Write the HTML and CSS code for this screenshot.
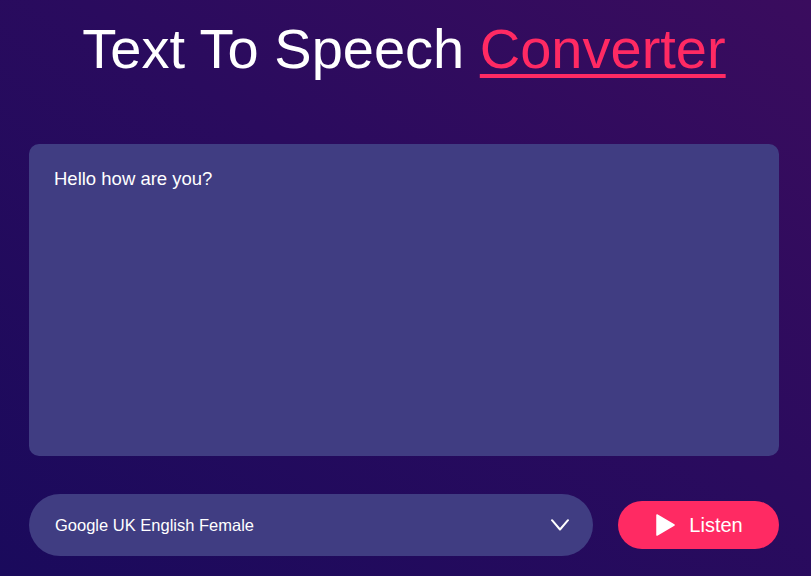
FILE: index.html
```html
<!DOCTYPE html>
<html lang="en">
<head>
<meta charset="utf-8">
<title>Text To Speech Converter</title>
<link rel="stylesheet" href="styles.css">
</head>
<body>
<main class="app">
  <h1 class="title">Text To Speech <a href="#" class="title-accent">Converter</a></h1>
  <textarea class="text-box" spellcheck="false">Hello how are you?</textarea>
  <div class="controls">
    <div class="voice-select">
      <span class="voice-name">Google UK English Female</span>
      <svg class="chevron" width="18" height="12" viewBox="0 0 18 12" aria-hidden="true">
        <path d="M1 1.2 L9 10.5 L17 1.2" fill="none" stroke="#fff" stroke-width="2" stroke-linecap="round" stroke-linejoin="round"/>
      </svg>
    </div>
    <button class="listen-btn" type="button">
      <svg class="play" width="19" height="22" viewBox="0 0 19 22" aria-hidden="true">
        <path d="M1 1 L18 11 L1 21 Z" fill="#fff" stroke="#fff" stroke-width="1.5" stroke-linejoin="round"/>
      </svg>
      <span>Listen</span>
    </button>
  </div>
</main>
</body>
</html>
```
FILE: styles.css
```css
html, body {
  margin: 0;
  height: 100%;
}

body {
  background: linear-gradient(to right top, #1a0a5c 0%, #2a0b5e 55%, #3a0c5e 100%);
  font-family: "Liberation Sans", Arial, sans-serif;
  color: #fff;
  overflow: hidden;
}

.app {
  width: 750px;
  margin: 0 0 0 29px;
  padding-top: 16px;
  display: flex;
  flex-direction: column;
}

.title {
  margin: 0;
  font-size: 56px;
  font-weight: 400;
  line-height: normal;
  text-align: center;
  color: #fff;
}

.title-accent {
  color: #ff2a63;
  text-decoration: underline;
  text-decoration-thickness: 4px;
  text-underline-offset: 6px;
}

.text-box {
  margin-top: 63px;
  height: 312px;
  box-sizing: border-box;
  background: #403d82;
  border: none;
  border-radius: 10px;
  padding: 24px 25px 20px;
  color: #fff;
  font-family: "Liberation Sans", Arial, sans-serif;
  font-size: 18.5px;
  line-height: normal;
  resize: none;
  outline: none;
}

.controls {
  margin-top: 38px;
  display: flex;
  align-items: center;
  gap: 25px;
}

.voice-select {
  flex: 1;
  height: 62px;
  box-sizing: border-box;
  background: #403d82;
  border-radius: 31px;
  padding: 0 24px 0 26px;
  display: flex;
  align-items: center;
  justify-content: space-between;
  font-size: 16.5px;
}

.chevron {
  display: block;
}

.listen-btn {
  width: 161px;
  height: 48px;
  border: none;
  border-radius: 24px;
  background: #ff2a63;
  color: #fff;
  font-family: "Liberation Sans", Arial, sans-serif;
  font-size: 20px;
  display: flex;
  align-items: center;
  justify-content: center;
  gap: 14px;
  padding: 0 0 0 2px;
  cursor: pointer;
}

.play {
  display: block;
}
```
